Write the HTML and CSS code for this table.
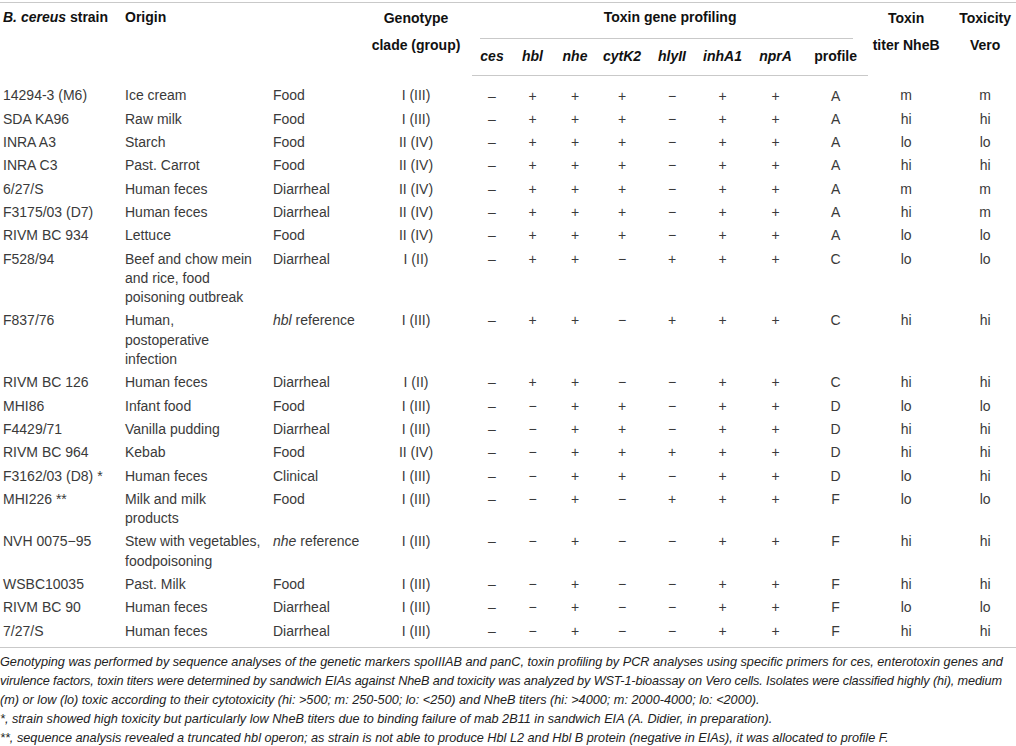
FILE: index.html
```html
<!DOCTYPE html>
<html lang="en">

<head>
    <meta charset="UTF-8">
    <title>B. cereus strains - toxin gene profiling</title>
    <link rel="stylesheet" href="styles.css">
</head>

<body>
    <table class="strains">
        <colgroup>
            <col class="c-strain">
            <col class="c-origin">
            <col class="c-source">
            <col class="c-clade">
            <col class="c-ces">
            <col class="c-hbl">
            <col class="c-nhe">
            <col class="c-cyt">
            <col class="c-hly">
            <col class="c-inh">
            <col class="c-npr">
            <col class="c-profile">
            <col class="c-titer">
            <col class="c-vero">
        </colgroup>
        <thead>
            <tr class="head-top">
                <th rowspan="2" class="left"><i>B. cereus</i> strain</th>
                <th rowspan="2" colspan="2" class="left">Origin</th>
                <th rowspan="2" class="two">Genotype<br>clade (group)</th>
                <th colspan="8" class="group">Toxin gene profiling</th>
                <th rowspan="2" class="two">Toxin<br>titer NheB</th>
                <th rowspan="2" class="two vero">Toxicity<br>Vero</th>
            </tr>
            <tr class="head-sub">
                <th><i>ces</i></th>
                <th><i>hbl</i></th>
                <th><i>nhe</i></th>
                <th><i>cytK2</i></th>
                <th><i>hlyII</i></th>
                <th><i>inhA1</i></th>
                <th><i>nprA</i></th>
                <th>profile</th>
            </tr>
        </thead>
        <tbody>
            <tr><td>14294-3 (M6)</td><td>Ice cream</td><td>Food</td><td class="mid">I (III)</td><td class="mid">–</td><td class="mid">+</td><td class="mid">+</td><td class="mid">+</td><td class="mid">−</td><td class="mid">+</td><td class="mid">+</td><td class="mid">A</td><td class="mid">m</td><td class="mid vero">m</td></tr>
            <tr><td>SDA KA96</td><td>Raw milk</td><td>Food</td><td class="mid">I (III)</td><td class="mid">–</td><td class="mid">+</td><td class="mid">+</td><td class="mid">+</td><td class="mid">−</td><td class="mid">+</td><td class="mid">+</td><td class="mid">A</td><td class="mid">hi</td><td class="mid vero">hi</td></tr>
            <tr><td>INRA A3</td><td>Starch</td><td>Food</td><td class="mid">II (IV)</td><td class="mid">–</td><td class="mid">+</td><td class="mid">+</td><td class="mid">+</td><td class="mid">−</td><td class="mid">+</td><td class="mid">+</td><td class="mid">A</td><td class="mid">lo</td><td class="mid vero">lo</td></tr>
            <tr><td>INRA C3</td><td>Past. Carrot</td><td>Food</td><td class="mid">II (IV)</td><td class="mid">–</td><td class="mid">+</td><td class="mid">+</td><td class="mid">+</td><td class="mid">−</td><td class="mid">+</td><td class="mid">+</td><td class="mid">A</td><td class="mid">hi</td><td class="mid vero">hi</td></tr>
            <tr><td>6/27/S</td><td>Human feces</td><td>Diarrheal</td><td class="mid">II (IV)</td><td class="mid">–</td><td class="mid">+</td><td class="mid">+</td><td class="mid">+</td><td class="mid">−</td><td class="mid">+</td><td class="mid">+</td><td class="mid">A</td><td class="mid">m</td><td class="mid vero">m</td></tr>
            <tr><td>F3175/03 (D7)</td><td>Human feces</td><td>Diarrheal</td><td class="mid">II (IV)</td><td class="mid">–</td><td class="mid">+</td><td class="mid">+</td><td class="mid">+</td><td class="mid">−</td><td class="mid">+</td><td class="mid">+</td><td class="mid">A</td><td class="mid">hi</td><td class="mid vero">m</td></tr>
            <tr><td>RIVM BC 934</td><td>Lettuce</td><td>Food</td><td class="mid">II (IV)</td><td class="mid">–</td><td class="mid">+</td><td class="mid">+</td><td class="mid">+</td><td class="mid">−</td><td class="mid">+</td><td class="mid">+</td><td class="mid">A</td><td class="mid">lo</td><td class="mid vero">lo</td></tr>
            <tr><td>F528/94</td><td>Beef and chow mein<br>and rice, food<br>poisoning outbreak</td><td>Diarrheal</td><td class="mid">I (II)</td><td class="mid">–</td><td class="mid">+</td><td class="mid">+</td><td class="mid">−</td><td class="mid">+</td><td class="mid">+</td><td class="mid">+</td><td class="mid">C</td><td class="mid">lo</td><td class="mid vero">lo</td></tr>
            <tr><td>F837/76</td><td>Human,<br>postoperative<br>infection</td><td><i>hbl</i> reference</td><td class="mid">I (III)</td><td class="mid">–</td><td class="mid">+</td><td class="mid">+</td><td class="mid">−</td><td class="mid">+</td><td class="mid">+</td><td class="mid">+</td><td class="mid">C</td><td class="mid">hi</td><td class="mid vero">hi</td></tr>
            <tr><td>RIVM BC 126</td><td>Human feces</td><td>Diarrheal</td><td class="mid">I (II)</td><td class="mid">–</td><td class="mid">+</td><td class="mid">+</td><td class="mid">−</td><td class="mid">−</td><td class="mid">+</td><td class="mid">+</td><td class="mid">C</td><td class="mid">hi</td><td class="mid vero">hi</td></tr>
            <tr><td>MHI86</td><td>Infant food</td><td>Food</td><td class="mid">I (III)</td><td class="mid">–</td><td class="mid">−</td><td class="mid">+</td><td class="mid">+</td><td class="mid">−</td><td class="mid">+</td><td class="mid">+</td><td class="mid">D</td><td class="mid">lo</td><td class="mid vero">lo</td></tr>
            <tr><td>F4429/71</td><td>Vanilla pudding</td><td>Diarrheal</td><td class="mid">I (III)</td><td class="mid">–</td><td class="mid">−</td><td class="mid">+</td><td class="mid">+</td><td class="mid">−</td><td class="mid">+</td><td class="mid">+</td><td class="mid">D</td><td class="mid">hi</td><td class="mid vero">hi</td></tr>
            <tr><td>RIVM BC 964</td><td>Kebab</td><td>Food</td><td class="mid">II (IV)</td><td class="mid">–</td><td class="mid">−</td><td class="mid">+</td><td class="mid">+</td><td class="mid">+</td><td class="mid">+</td><td class="mid">+</td><td class="mid">D</td><td class="mid">hi</td><td class="mid vero">hi</td></tr>
            <tr><td>F3162/03 (D8) *</td><td>Human feces</td><td>Clinical</td><td class="mid">I (III)</td><td class="mid">–</td><td class="mid">−</td><td class="mid">+</td><td class="mid">+</td><td class="mid">−</td><td class="mid">+</td><td class="mid">+</td><td class="mid">D</td><td class="mid">lo</td><td class="mid vero">hi</td></tr>
            <tr><td>MHI226 **</td><td>Milk and milk<br>products</td><td>Food</td><td class="mid">I (III)</td><td class="mid">–</td><td class="mid">−</td><td class="mid">+</td><td class="mid">−</td><td class="mid">+</td><td class="mid">+</td><td class="mid">+</td><td class="mid">F</td><td class="mid">lo</td><td class="mid vero">lo</td></tr>
            <tr><td>NVH 0075−95</td><td>Stew with vegetables,<br>foodpoisoning</td><td><i>nhe</i> reference</td><td class="mid">I (III)</td><td class="mid">–</td><td class="mid">−</td><td class="mid">+</td><td class="mid">−</td><td class="mid">−</td><td class="mid">+</td><td class="mid">+</td><td class="mid">F</td><td class="mid">hi</td><td class="mid vero">hi</td></tr>
            <tr><td>WSBC10035</td><td>Past. Milk</td><td>Food</td><td class="mid">I (III)</td><td class="mid">–</td><td class="mid">−</td><td class="mid">+</td><td class="mid">−</td><td class="mid">−</td><td class="mid">+</td><td class="mid">+</td><td class="mid">F</td><td class="mid">hi</td><td class="mid vero">hi</td></tr>
            <tr><td>RIVM BC 90</td><td>Human feces</td><td>Diarrheal</td><td class="mid">I (III)</td><td class="mid">–</td><td class="mid">−</td><td class="mid">+</td><td class="mid">−</td><td class="mid">−</td><td class="mid">+</td><td class="mid">+</td><td class="mid">F</td><td class="mid">lo</td><td class="mid vero">lo</td></tr>
            <tr><td>7/27/S</td><td>Human feces</td><td>Diarrheal</td><td class="mid">I (III)</td><td class="mid">–</td><td class="mid">−</td><td class="mid">+</td><td class="mid">−</td><td class="mid">−</td><td class="mid">+</td><td class="mid">+</td><td class="mid">F</td><td class="mid">hi</td><td class="mid vero">hi</td></tr>
        </tbody>
    </table>

    <div class="notes">
        <p>Genotyping was performed by sequence analyses of the genetic markers spoIIIAB and panC, toxin profiling by PCR analyses using specific primers for ces, enterotoxin genes and</p>
        <p class="tight">virulence factors, toxin titers were determined by sandwich EIAs against NheB and toxicity was analyzed by WST-1-bioassay on Vero cells. Isolates were classified highly (hi), medium</p>
        <p>(m) or low (lo) toxic according to their cytotoxicity (hi: &gt;500; m: 250-500; lo: &lt;250) and NheB titers (hi: &gt;4000; m: 2000-4000; lo: &lt;2000).</p>
        <p>*, strain showed high toxicity but particularly low NheB titers due to binding failure of mab 2B11 in sandwich EIA (A. Didier, in preparation).</p>
        <p>**, sequence analysis revealed a truncated hbl operon; as strain is not able to produce Hbl L2 and Hbl B protein (negative in EIAs), it was allocated to profile F.</p>
    </div>
</body>

</html>
```

FILE: styles.css
```css
body {
    font-family: "Liberation Sans", Arial, sans-serif;
    color: #3a3a3a;
    background: #fff;
    margin: 0;
    padding-top: 2px;
}

.strains {
    width: 1016px;
    border-collapse: collapse;
    table-layout: fixed;
    font-size: 14px;
    border-top: 1px solid #c9c9c9;
    border-bottom: 1px solid #c9c9c9;
}

.c-strain { width: 122px; }
.c-origin { width: 148px; }
.c-source { width: 90px; }
.c-clade { width: 112px; }
.c-ces { width: 40px; }
.c-hbl { width: 41px; }
.c-nhe { width: 44px; }
.c-cyt { width: 50px; }
.c-hly { width: 50px; }
.c-inh { width: 51px; }
.c-npr { width: 55px; }
.c-profile { width: 65px; }
.c-titer { width: 76px; }
.c-vero { width: 72px; }

/* header */

thead th {
    color: #111;
    font-weight: bold;
    line-height: 17px;
    padding: 0;
    text-align: center;
    vertical-align: top;
}

thead tr.head-top th {
    height: 36px;
    padding-top: 6px;
    box-sizing: border-box;
}

thead th.left {
    text-align: left;
    padding-left: 3px;
}

thead tr.head-top th.two {
    line-height: 27px;
    padding-top: 2px;
}

thead th.group {
    background: linear-gradient(#c9c9c9, #c9c9c9) no-repeat;
    background-size: calc(100% - 23px) 1px;
    background-position: 8px 100%;
}

thead tr.head-sub th {
    height: 36px;
    vertical-align: middle;
    border-bottom: 1px solid #c9c9c9;
}

.vero {
    padding-left: 10px !important;
}

/* body */

tbody td {
    padding: 2px 3px;
    line-height: 19.3px;
    vertical-align: top;
    white-space: nowrap;
}

tbody td.mid {
    text-align: center;
    padding-left: 0;
    padding-right: 0;
}

tbody tr:first-child td {
    padding-top: 11px;
}

tbody tr:last-child td {
    padding-bottom: 6px;
}

/* footnotes */

.notes {
    margin-top: 5px;
    font-size: 12.7px;
    font-style: italic;
    line-height: 19px;
    color: #222;
    white-space: nowrap;
}

.notes p {
    margin: 0;
}

.notes .tight {
    letter-spacing: -0.12px;
}
```
